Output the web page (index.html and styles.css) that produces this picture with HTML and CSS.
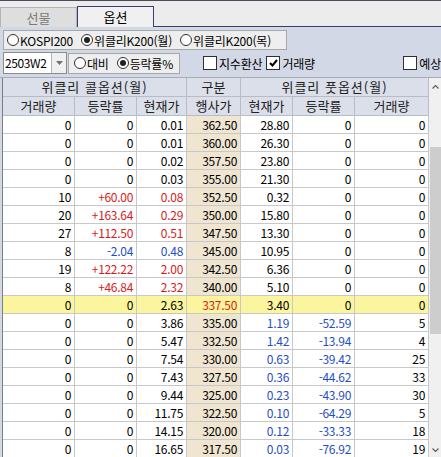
FILE: index.html
```html
<!DOCTYPE html>
<html lang="ko">
<head>
    <meta charset="UTF-8">
    <meta name="viewport" content="width=device-width, initial-scale=1.0">
    <title>위클리 옵션 시세</title>
    <link rel="stylesheet" href="styles.css">
</head>
<body>
    <div class="tabbar">
        <div class="tab">선물</div>
        <div class="tab active">옵션</div>
    </div>

    <div class="panel">
        <div class="row">
            <div class="group">
                <label class="opt"><span class="radio"></span>KOSPI200</label>
                <label class="opt"><span class="radio on"></span>위클리K200(월)</label>
                <label class="opt"><span class="radio"></span>위클리K200(목)</label>
            </div>
        </div>
        <div class="row">
            <div class="combo">
                <span class="combo-text">2503W2</span>
                <span class="combo-btn"><svg width="7" height="4" viewBox="0 0 7 4"><path d="M0 0h7L3.5 4z" fill="#707070"/></svg></span>
            </div>
            <div class="group small">
                <label class="opt"><span class="radio"></span>대비</label>
                <label class="opt"><span class="radio on"></span>등락률%</label>
            </div>
            <label class="opt chk-first"><span class="check"></span>지수환산</label>
            <label class="opt"><span class="check on"><svg width="9" height="8" viewBox="0 0 9 8"><path d="M1 4l2.5 2.5L8 1" fill="none" stroke="#000" stroke-width="2"/></svg></span>거래량</label>
            <label class="opt chk-last"><span class="check"></span>예상</label>
        </div>
    </div>

    <div class="board">
        <div class="grid" id="grid">
            <div class="hd span3">위클리 콜옵션(월)</div>
            <div class="hd">구분</div>
            <div class="hd span3">위클리 풋옵션(월)</div>
            <div class="hd">거래량</div>
            <div class="hd">등락률</div>
            <div class="hd">현재가</div>
            <div class="hd">행사가</div>
            <div class="hd">현재가</div>
            <div class="hd">등락률</div>
            <div class="hd">거래량</div>
        </div>
        <div class="vscroll">
            <div class="sb-btn"><svg width="7" height="4" viewBox="0 0 7 4"><path d="M0.5 3.5L3.5 0.5L6.5 3.5" fill="none" stroke="#606060" stroke-width="1.2"/></svg></div>
            <div class="sb-track"><div class="sb-thumb"></div></div>
            <div class="sb-btn"><svg width="7" height="4" viewBox="0 0 7 4"><path d="M0.5 0.5L3.5 3.5L6.5 0.5" fill="none" stroke="#606060" stroke-width="1.2"/></svg></div>
        </div>
    </div>

    <script>
        // call vol, call rate, call price, strike, put price, put rate, put vol, colour flags
        const rows = [
            ["0", "0", "0.01", "362.50", "28.80", "0", "0", ""],
            ["0", "0", "0.01", "360.00", "26.30", "0", "0", ""],
            ["0", "0", "0.02", "357.50", "23.80", "0", "0", ""],
            ["0", "0", "0.03", "355.00", "21.30", "0", "0", ""],
            ["10", "+60.00", "0.08", "352.50", "0.32", "0", "0", "cr"],
            ["20", "+163.64", "0.29", "350.00", "15.80", "0", "0", "cr"],
            ["27", "+112.50", "0.51", "347.50", "13.30", "0", "0", "cr"],
            ["8", "-2.04", "0.48", "345.00", "10.95", "0", "0", "cb"],
            ["19", "+122.22", "2.00", "342.50", "6.36", "0", "0", "cr"],
            ["8", "+46.84", "2.32", "340.00", "5.10", "0", "0", "cr"],
            ["0", "0", "2.63", "337.50", "3.40", "0", "0", "atm"],
            ["0", "0", "3.86", "335.00", "1.19", "-52.59", "5", "pb"],
            ["0", "0", "5.47", "332.50", "1.42", "-13.94", "4", "pb"],
            ["0", "0", "7.54", "330.00", "0.63", "-39.42", "25", "pb"],
            ["0", "0", "7.43", "327.50", "0.36", "-44.62", "33", "pb"],
            ["0", "0", "9.44", "325.00", "0.23", "-43.90", "30", "pb"],
            ["0", "0", "11.75", "322.50", "0.10", "-64.29", "5", "pb"],
            ["0", "0", "14.15", "320.00", "0.12", "-33.33", "18", "pb"],
            ["0", "0", "16.65", "317.50", "0.03", "-76.92", "19", "pb"]
        ];

        const grid = document.getElementById("grid");
        rows.forEach(r => {
            const f = r[7];
            const cls = [
                "",
                f === "cr" ? "up" : f === "cb" ? "down" : "",
                f === "cr" ? "up" : f === "cb" ? "down" : "",
                "strike" + (f === "atm" ? " up" : ""),
                f === "pb" ? "down" : "",
                f === "pb" ? "down" : "",
                ""
            ];
            for (let i = 0; i < 7; i++) {
                grid.insertAdjacentHTML(
                    "beforeend",
                    `<div class="cell ${cls[i]} ${f === "atm" ? "atm" : ""}">${r[i]}</div>`
                );
            }
        });
    </script>
</body>
</html>
```

FILE: styles.css
```css
body {
  width: 441px;
  height: 457px;
  margin: 0;
  padding: 0;
  overflow: hidden;
  background: #d3d8e6;
  font-family: "Noto Sans CJK KR", "DejaVu Sans", sans-serif;
  font-size: 12px;
  color: #000;
}
.tabbar {
  height: 24px;
  padding-top: 1px;
  display: flex;
  align-items: flex-end;
  background: #ececec;
  border-top: 1px solid #4a4a5a;
  border-bottom: 1px solid #3c3c6e;
}
.tab {
  width: 75px;
  height: 19px;
  line-height: 19px;
  text-align: center;
  font-size: 13px;
  color: #7a7a7a;
  background: #dedede;
  border: 1px solid #b4b4b4;
  border-bottom: none;
  margin-bottom: -1px;
}
.tab.active {
  color: #000;
  background: #f0f0f0;
  border-color: #3c3c6e;
  height: 20px;
}
.panel {
  padding: 2px 0 0 3px;
  height: 48px;
  border-bottom: 1px solid #a8acb6;
}
.row {
  display: flex;
  align-items: center;
  height: 22px;
  margin-bottom: 1px;
}
.group {
  display: flex;
  align-items: center;
  height: 18px;
  padding: 0 4px 0 3px;
  gap: 8px;
  background: #eeeeee;
  border: 1px solid #a8a8a8;
  width: 275px;
}
.group.small {
  width: 101px;
  height: 19px;
  padding-left: 5px;
}
.opt {
  display: flex;
  align-items: center;
  gap: 1px;
  white-space: nowrap;
  letter-spacing: -0.2px;
}
.radio {
  width: 10px;
  height: 10px;
  border: 1px solid #303030;
  border-radius: 50%;
  background: #fff;
  position: relative;
}
.radio.on::after {
  content: "";
  position: absolute;
  top: 2px;
  left: 2px;
  width: 6px;
  height: 6px;
  border-radius: 50%;
  background: #202020;
}
.check {
  width: 12px;
  height: 12px;
  margin-right: 1px;
  border: 1px solid #303030;
  background: #fff;
  display: flex;
  align-items: center;
  justify-content: center;
}
.chk-first {
  margin-left: 23px;
  margin-right: 4px;
}
.chk-last {
  margin-left: auto;
  margin-right: 0;
}
.combo {
  display: flex;
  width: 62px;
  height: 20px;
  border: 1px solid #8c8c8c;
  background: #fff;
  margin-right: 1px;
}
.combo-text {
  flex: 1;
  line-height: 20px;
  padding-left: 1px;
  letter-spacing: -0.4px;
}
.combo-btn {
  width: 14px;
  display: flex;
  align-items: center;
  justify-content: center;
  background: #f0f0f0;
  border-left: 1px solid #b4b4b4;
}
.board {
  display: flex;
  margin-left: 2px;
  height: 380px;
  overflow: hidden;
  border-left: 1px solid #7f7f7f;
}
.grid {
  display: grid;
  grid-template-columns: 72px 62px 50px 54px 52px 62px 74px;
  grid-auto-rows: 18px;
  grid-template-rows: 19px 19px;
  background: #fff;
}
.hd {
  box-sizing: border-box;
  background: #dbdfe9;
  border-right: 1px solid #b9bcc4;
  border-bottom: 1px solid #b9bcc4;
  text-align: center;
  line-height: 18px;
  font-size: 13px;
  color: #222;
}
.span3 {
  grid-column: span 3;
  letter-spacing: 1px;
}
.cell {
  box-sizing: border-box;
  border-right: 1px solid #c8c8c8;
  border-bottom: 1px solid #c8c8c8;
  text-align: right;
  padding-right: 3px;
  line-height: 17px;
  letter-spacing: -0.3px;
}
.cell.strike {
  background: #efe5d1;
}
.cell.atm {
  background: #fbf59e;
}
.cell.up {
  color: #d81c1c;
}
.cell.down {
  color: #1f4fc4;
}
.vscroll {
  width: 12px;
  display: flex;
  flex-direction: column;
  background: #f0f0f0;
}
.sb-btn {
  height: 17px;
  display: flex;
  align-items: center;
  justify-content: center;
}
.sb-track {
  flex: 1;
  padding-top: 52px;
}
.sb-thumb {
  width: 11px;
  height: 187px;
  margin-left: 1px;
  background: #cdcdcd;
}
```
